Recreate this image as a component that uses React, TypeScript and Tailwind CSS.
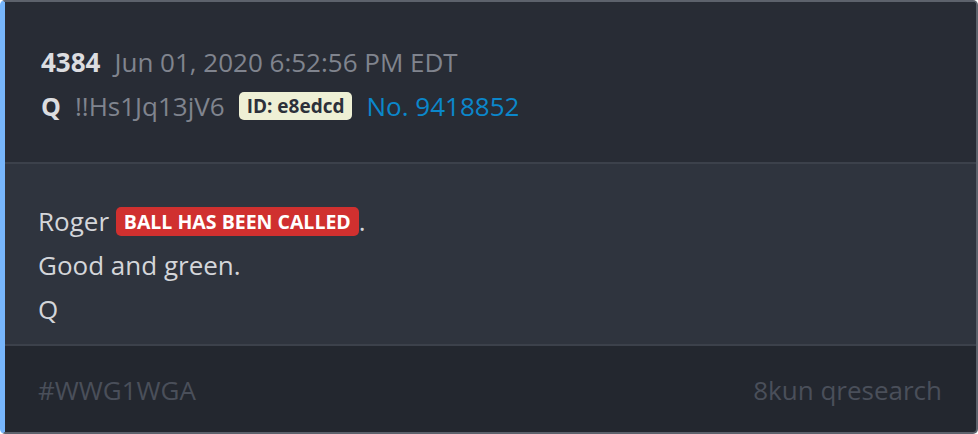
const post = {
  num: "4384",
  time: "Jun 01, 2020 6:52:56 PM EDT",
  name: "Q",
  trip: "!!Hs1Jq13jV6",
  id: "e8edcd",
  postNo: "9418852",
};

export default function App() {
  return (
    <div className="w-[978px] h-[434px] bg-white font-['Open_Sans',sans-serif]">
      <div className="h-full flex flex-col overflow-hidden rounded-[5px] border-2 border-[#5d626c] border-l-[5px] border-l-[#77b6fc] bg-[#23272f]">
        {/* header */}
        <div className="bg-[#282c35] border-b-2 border-[#3c414b] pl-[36px] pt-[38px] pb-[34px] text-[26px] leading-[44px]">
          <div className="flex items-center gap-[14px]">
            <span className="font-bold text-[#dcdde0]">{post.num}</span>
            <span className="text-[#80848e]">{post.time}</span>
          </div>
          <div className="flex items-center gap-[14px]">
            <span className="font-bold text-[25px] text-[#dcdde0]">{post.name}</span>
            <span className="text-[#80848e]">{post.trip}</span>
            <span className="h-[28px] px-[8px] rounded-[5px] bg-[#eef0d5] text-[#2c303a] text-[19px] font-bold leading-[28px]">
              ID: {post.id}
            </span>
            <span className="text-[#0b87cb]">No. {post.postNo}</span>
          </div>
        </div>

        {/* body */}
        <div className="bg-[#2f343e] border-b-2 border-[#3c414b] pl-[33px] pt-[35px] pb-[13px] text-[26px] leading-[44px] text-[#d4d6da]">
          <p>
            Roger{" "}
            <span className="inline-block h-[29px] px-[8px] rounded-[5px] bg-[#d0302f] text-white text-[19.5px] font-bold leading-[29px] align-[2px]">
              BALL HAS BEEN CALLED
            </span>
            .
          </p>
          <p>Good and green.</p>
          <p>Q</p>
        </div>

        {/* footer */}
        <div className="flex-1 flex justify-between pl-[33px] pr-[34px] pt-[22px] text-[26px] leading-[44px] text-[#4a4f5a]">
          <span>#WWG1WGA</span>
          <span>8kun qresearch</span>
        </div>
      </div>
    </div>
  );
}
